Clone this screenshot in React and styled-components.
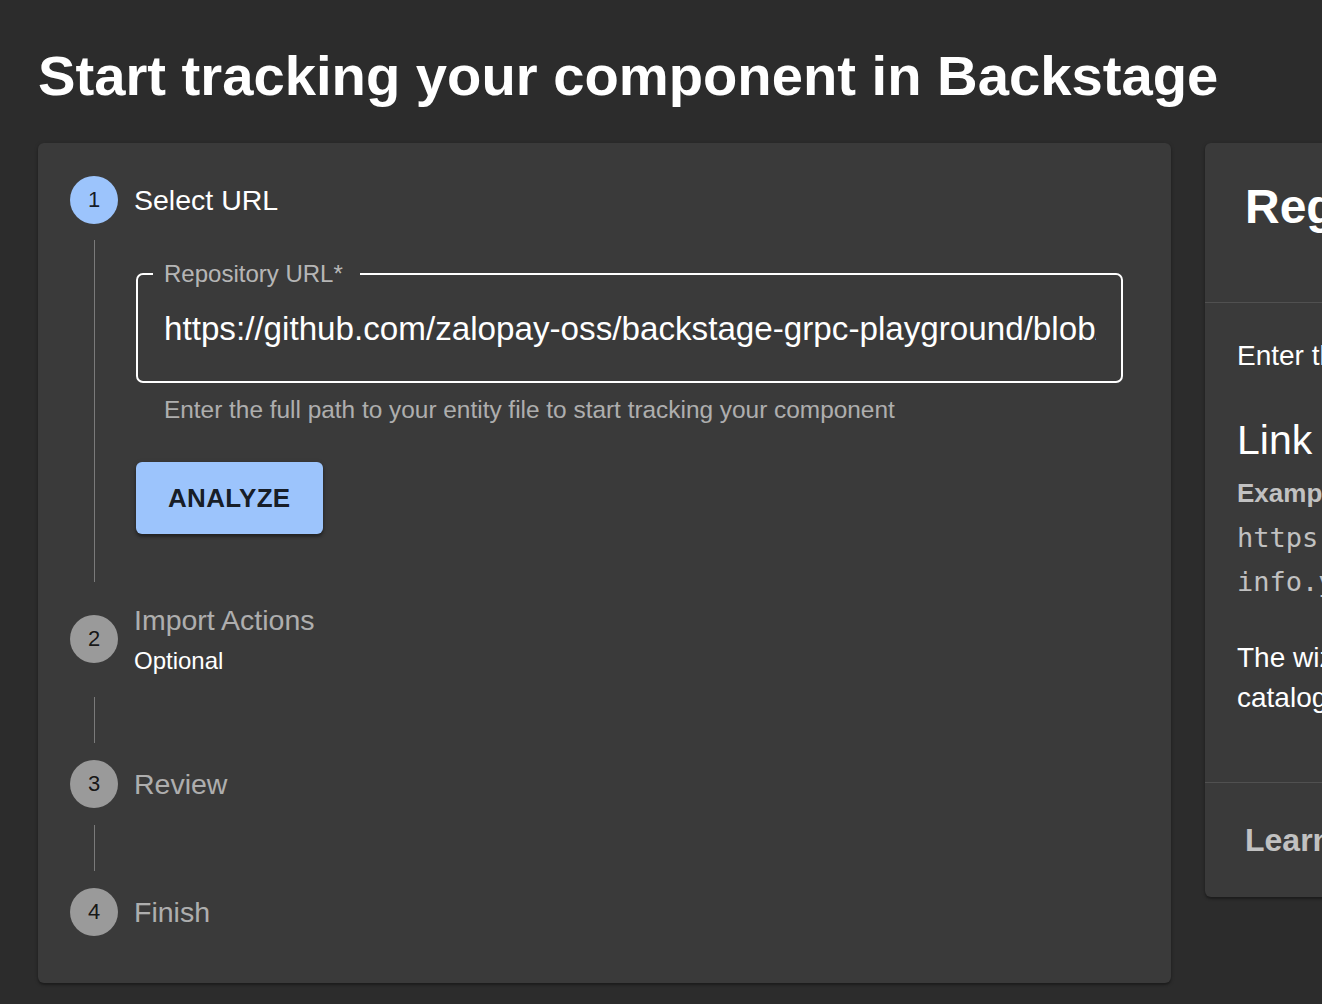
import React from 'react';
import styled, { createGlobalStyle } from 'styled-components';

const GlobalStyle = createGlobalStyle`
  html, body {
    margin: 0;
    padding: 0;
    background: #2c2c2c;
    overflow: hidden;
  }
  body {
    font-family: "Liberation Sans", Arial, sans-serif;
    color: #fff;
  }
`;

const steps = [
  { n: 1, label: 'Select URL', active: true },
  { n: 2, label: 'Import Actions', optional: true },
  { n: 3, label: 'Review' },
  { n: 4, label: 'Finish' },
];

export default function App() {
  return (
    <Page>
      <GlobalStyle />
      <Title>Start tracking your component in Backstage</Title>
      <Columns>
        <StepperCard>
          {steps.map((step, i) => (
            <React.Fragment key={step.n}>
              <StepRow>
                <StepIcon $active={step.active}>{step.n}</StepIcon>
                <StepLabel>
                  <StepName $active={step.active}>{step.label}</StepName>
                  {step.optional && <StepOptional>Optional</StepOptional>}
                </StepLabel>
              </StepRow>
              {i < steps.length - 1 && (
                <StepContent $filled={step.active}>
                  {step.active && (
                    <>
                      <Field>
                        <legend>Repository URL*</legend>
                        <input
                          readOnly
                          value="https://github.com/zalopay-oss/backstage-grpc-playground/blob/main/catalog-info.yaml"
                        />
                      </Field>
                      <Helper>Enter the full path to your entity file to start tracking your component</Helper>
                      <AnalyzeButton>ANALYZE</AnalyzeButton>
                    </>
                  )}
                </StepContent>
              )}
            </React.Fragment>
          ))}
        </StepperCard>

        <InfoCard>
          <InfoHeader>Register an existing component</InfoHeader>
          <InfoBody>
            <Line>Enter the URL to your source code repository to add it to Backstage.</Line>
            <SubTitle>Link to an existing entity file</SubTitle>
            <Example>Example:</Example>
            <Code>
              https://github.com/backstage/backstage/blob/master/catalog-
              <br />
              info.yaml
            </Code>
            <Paragraph>
              <Line>The wizard analyzes the file, previews the entities, and adds them to the</Line>
              <Line>catalog.</Line>
            </Paragraph>
          </InfoBody>
          <InfoFooter>Learn more</InfoFooter>
        </InfoCard>
      </Columns>
    </Page>
  );
}

const Page = styled.div`
  padding: 42px 0 0 38px;
  height: 1004px;
  box-sizing: border-box;
`;

const Title = styled.h1`
  margin: 0 0 34px;
  font-size: 56.2px;
  line-height: 1.2;
  font-weight: 700;
  color: #fff;
  white-space: nowrap;
`;

const Columns = styled.div`
  display: flex;
  align-items: flex-start;
  gap: 34px;
`;

const Card = styled.div`
  background: #3a3a3a;
  border-radius: 6px;
  box-shadow: 0 2px 2px rgba(0, 0, 0, 0.25), 0 1px 4px rgba(0, 0, 0, 0.2);
  box-sizing: border-box;
`;

const StepperCard = styled(Card)`
  flex: 0 0 1133px;
  padding: 33px 32px 47px;
  display: flex;
  flex-direction: column;
`;

const StepRow = styled.div`
  display: flex;
  align-items: center;
  gap: 16px;
`;

const StepIcon = styled.div`
  flex: 0 0 48px;
  height: 48px;
  border-radius: 50%;
  background: ${(p) => (p.$active ? '#9cc4fc' : '#9a9a9a')};
  color: rgba(0, 0, 0, 0.87);
  font-size: 22px;
  display: flex;
  align-items: center;
  justify-content: center;
`;

const StepLabel = styled.div`
  display: flex;
  flex-direction: column;
`;

const StepName = styled.div`
  font-size: 28.5px;
  line-height: 44px;
  color: ${(p) => (p.$active ? '#fff' : 'rgba(255,255,255,0.6)')};
`;

const StepOptional = styled.div`
  font-size: 24px;
  line-height: 38px;
  color: #fff;
`;

const StepContent = styled.div`
  margin: ${(p) => (p.$filled ? '16px 0 16px 24px' : '17px 0 17px 24px')};
  border-left: 1px solid #7a7a7a;
  min-height: 46px;
  padding: ${(p) => (p.$filled ? '22px 0 48px 41px' : '0')};
  display: flex;
  flex-direction: column;
  align-items: flex-start;
`;

const Field = styled.fieldset`
  align-self: stretch;
  margin: 0 16px 0 0;
  padding: 0 25px 32px 15px;
  border: 2px solid #fff;
  border-radius: 7px;
  min-width: 0;

  legend {
    padding: 0 17px 0 11px;
    font-size: 24px;
    line-height: 1;
    color: rgba(255, 255, 255, 0.65);
  }

  input {
    display: block;
    width: 100%;
    box-sizing: border-box;
    margin-top: 23px;
    padding: 0 0 0 11px;
    border: none;
    outline: none;
    background: transparent;
    color: #fff;
    font-family: "Liberation Sans", Arial, sans-serif;
    font-size: 33.2px;
    line-height: 40px;
    height: 40px;
  }
`;

const Helper = styled.div`
  margin: 9px 0 0 28px;
  font-size: 24.4px;
  line-height: 36px;
  color: rgba(255, 255, 255, 0.6);
`;

const AnalyzeButton = styled.button`
  margin-top: 34px;
  height: 72px;
  padding: 0 32px;
  border: none;
  border-radius: 6px;
  background: #9cc4fc;
  color: rgba(0, 0, 0, 0.87);
  font-family: "Liberation Sans", Arial, sans-serif;
  font-size: 26px;
  font-weight: 700;
  letter-spacing: 0.3px;
  box-shadow: 0 3px 3px rgba(0, 0, 0, 0.3), 0 1px 5px rgba(0, 0, 0, 0.2);
  cursor: pointer;
`;

const InfoCard = styled(Card)`
  flex: 0 0 700px;
  display: flex;
  flex-direction: column;
`;

const InfoHeader = styled.div`
  height: 160px;
  box-sizing: border-box;
  padding: 35px 0 0 40px;
  font-size: 48px;
  line-height: 58px;
  font-weight: 700;
  border-bottom: 1px solid #505050;
  white-space: nowrap;
`;

const InfoBody = styled.div`
  padding: 32px 32px 64px;
  border-bottom: 1px solid #505050;
`;

const Line = styled.div`
  font-size: 28px;
  line-height: 42px;
  white-space: nowrap;
`;

const SubTitle = styled.div`
  margin-top: 39px;
  font-size: 41px;
  line-height: 49px;
  font-weight: 500;
  white-space: nowrap;
`;

const Example = styled.div`
  margin-top: 9px;
  font-size: 26px;
  line-height: 39px;
  font-weight: 700;
  color: rgba(255, 255, 255, 0.7);
`;

const Code = styled.code`
  display: block;
  margin-top: 3px;
  font-family: "DejaVu Sans Mono", monospace;
  font-size: 27px;
  line-height: 44px;
  color: rgba(255, 255, 255, 0.7);
  white-space: nowrap;
`;

const Paragraph = styled.div`
  margin-top: 34px;

  ${Line} {
    line-height: 40px;
  }
`;

const InfoFooter = styled.div`
  height: 114px;
  display: flex;
  align-items: center;
  padding-left: 40px;
  font-size: 32px;
  font-weight: 700;
  color: rgba(255, 255, 255, 0.7);
`;
